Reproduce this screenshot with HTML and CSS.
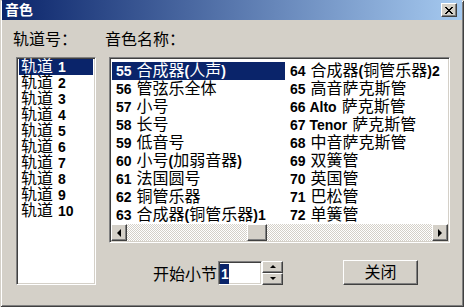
FILE: index.html
```html
<!DOCTYPE html>
<html lang="zh-CN">

<head>
  <meta charset="utf-8">
  <title>音色</title>
  <link rel="stylesheet" href="styles.css">
</head>

<body>
  <div class="dialog">
    <div class="titlebar">
      <span class="title">音色</span>
      <span class="close-btn">
        <svg width="8" height="7" viewBox="0 0 8 7" shape-rendering="crispEdges">
          <path fill="#000" d="M0 0h2v1H0zM6 0h2v1H6zM1 1h2v1H1zM5 1h2v1H5zM2 2h4v1H2zM3 3h2v1H3zM2 4h4v1H2zM1 5h2v1H1zM5 5h2v1H5zM0 6h2v1H0zM6 6h2v1H6z" />
        </svg>
      </span>
    </div>
    <div class="body">
      <div class="col-track">
        <div class="label">轨道号：</div>
        <ul class="sunken track-list">
          <li class="selected">轨道<b>1</b></li>
          <li>轨道<b>2</b></li>
          <li>轨道<b>3</b></li>
          <li>轨道<b>4</b></li>
          <li>轨道<b>5</b></li>
          <li>轨道<b>6</b></li>
          <li>轨道<b>7</b></li>
          <li>轨道<b>8</b></li>
          <li>轨道<b>9</b></li>
          <li>轨道<b>10</b></li>
        </ul>
      </div>
      <div class="col-voice">
        <div class="label">音色名称：</div>
        <div class="sunken voice-box">
          <ul class="voice-list">
            <li class="selected"><b>55</b>合成器<b>(</b>人声<b>)</b></li>
            <li><b>56</b>管弦乐全体</li>
            <li><b>57</b>小号</li>
            <li><b>58</b>长号</li>
            <li><b>59</b>低音号</li>
            <li><b>60</b>小号<b>(</b>加弱音器<b>)</b></li>
            <li><b>61</b>法国圆号</li>
            <li><b>62</b>铜管乐器</li>
            <li><b>63</b>合成器<b>(</b>铜管乐器<b>)1</b></li>
            <li><b>64</b>合成器<b>(</b>铜管乐器<b>)2</b></li>
            <li><b>65</b>高音萨克斯管</li>
            <li><b>66&nbsp;Alto</b>萨克斯管</li>
            <li><b>67&nbsp;Tenor</b>萨克斯管</li>
            <li><b>68</b>中音萨克斯管</li>
            <li><b>69</b>双簧管</li>
            <li><b>70</b>英国管</li>
            <li><b>71</b>巴松管</li>
            <li><b>72</b>单簧管</li>
          </ul>
          <div class="hscroll">
            <span class="raised arrow"><i class="tri-left"></i></span>
            <span class="scroll-track"><span class="raised thumb"></span></span>
            <span class="raised arrow"><i class="tri-right"></i></span>
          </div>
        </div>
        <div class="start-row">
          <span class="start-label">开始小节</span>
          <span class="sunken edit"><span class="edit-sel">1</span></span>
          <span class="spinner">
            <span class="raised spin"><i class="tri-up"></i></span>
            <span class="raised spin"><i class="tri-down"></i></span>
          </span>
          <span class="raised button">关闭</span>
        </div>
      </div>
    </div>
  </div>
</body>

</html>
```

FILE: styles.css
```css
* {
  box-sizing: border-box;
}

body {
  margin: 0;
  font-family: "Liberation Sans", "Noto Sans CJK SC", sans-serif;
  font-size: 16px;
  color: #000;
}

b {
  font-size: 14px;
  font-weight: bold;
}

.dialog {
  width: 464px;
  height: 307px;
  padding: 0 2px;
  background: #d4d0c8;
  box-shadow: inset 1px 1px #d4d0c8, inset -1px -1px #404040,
    inset 2px 2px #fff, inset -2px -2px #808080;
}

/* title bar */
.titlebar {
  height: 20px;
  display: flex;
  align-items: center;
  justify-content: space-between;
  padding: 0 5px 0 3px;
  background: linear-gradient(to right, #0a246a, #a6caf0);
  color: #fff;
}

.title {
  font-size: 14px;
  font-weight: bold;
  line-height: 20px;
}

.close-btn {
  width: 16px;
  height: 14px;
  display: flex;
  align-items: center;
  justify-content: center;
  background: #d4d0c8;
  border: 1px solid;
  border-color: #fff #404040 #404040 #fff;
  box-shadow: inset -1px -1px #808080;
}

/* classic 3d borders */
.sunken {
  background: #fff;
  border: 1px solid;
  border-color: #808080 #fff #fff #808080;
  box-shadow: inset 1px 1px #404040, inset -1px -1px #d4d0c8;
}

.raised {
  background: #d4d0c8;
  border: 1px solid;
  border-color: #fff #404040 #404040 #fff;
  box-shadow: inset -1px -1px #808080, inset 1px 1px #d4d0c8;
  display: flex;
  align-items: center;
  justify-content: center;
}

.body {
  display: flex;
  padding: 12px 0 0 11px;
}

.label {
  height: 16px;
  line-height: 16px;
  white-space: nowrap;
}

/* track list */
.col-track {
  width: 83px;
  display: flex;
  flex-direction: column;
}

.track-list {
  list-style: none;
  margin: 9px 0 0 3px;
  padding: 1px;
  width: 80px;
  height: 228px;
}

.track-list li {
  height: 16px;
  line-height: 16px;
  margin: 0 1px;
  padding-left: 2px;
  white-space: nowrap;
}

.track-list b {
  margin-left: 5px;
}

.selected {
  background: #0a246a;
  color: #fff;
}

/* voice list */
.col-voice {
  margin-left: 9px;
  display: flex;
  flex-direction: column;
}

.voice-box {
  margin: 9px 0 0 4px;
  width: 341px;
  height: 186px;
  padding: 1px;
  display: flex;
  flex-direction: column;
}

.voice-list {
  list-style: none;
  margin: 0;
  padding: 3px 0 0 1px;
  height: 165px;
  display: grid;
  grid-template-rows: repeat(9, 18px);
  grid-auto-flow: column;
  grid-auto-columns: 174px;
  overflow: hidden;
}

.voice-list li {
  line-height: 18px;
  padding-left: 4px;
  white-space: nowrap;
}

.voice-list li.selected {
  margin-right: 1px;
}

.voice-list b:first-child {
  margin-right: 5px;
}

.hscroll {
  height: 17px;
  display: flex;
}

.arrow {
  width: 16px;
  height: 17px;
}

.scroll-track {
  flex: 1;
  display: flex;
  background: repeating-conic-gradient(#d4d0c8 0 25%, #fff 0 50%) 0 0 / 2px 2px;
}

.thumb {
  width: 20px;
  height: 17px;
  margin-left: 120px;
}

.tri-left,
.tri-right,
.tri-up,
.tri-down {
  width: 0;
  height: 0;
  border: 4px solid transparent;
}

.tri-left {
  border-left: 0;
  border-right-color: #000;
}

.tri-right {
  border-right: 0;
  border-left-color: #000;
}

.tri-up {
  border-width: 0 3px 3px;
  border-bottom-color: #000;
}

.tri-down {
  border-width: 3px 3px 0;
  border-top-color: #000;
}

/* bottom row */
.start-row {
  display: flex;
  align-items: center;
  height: 25px;
  margin-top: 17px;
  padding-left: 48px;
}

.start-label {
  width: 64px;
  white-space: nowrap;
}

.edit {
  width: 44px;
  height: 24px;
  margin-left: 1px;
  padding: 2px 1px;
}

.edit-sel {
  display: block;
  width: 9px;
  height: 20px;
  padding-left: 1px;
  line-height: 20px;
  font-size: 14px;
  font-weight: bold;
  background: #0a246a;
  color: #fff;
}

.spinner {
  width: 21px;
  height: 24px;
  display: flex;
  flex-direction: column;
}

.spin {
  height: 12px;
}

.button {
  width: 75px;
  height: 25px;
  margin-left: 60px;
  line-height: 23px;
}
```
